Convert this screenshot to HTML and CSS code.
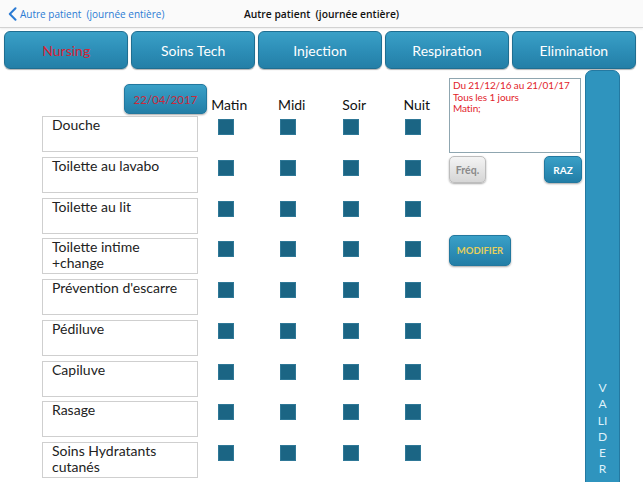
FILE: index.html
```html
<!DOCTYPE html>
<html lang="fr">
<head>
<meta charset="utf-8">
<title>Autre patient (journée entière)</title>
<link rel="stylesheet" href="styles.css">
</head>
<body>
<header class="topbar">
  <a class="back" href="#">
    <svg class="chev" width="9" height="14" viewBox="0 0 9 14"><path d="M7.5 1.2 L1.8 7 L7.5 12.8" fill="none" stroke="#2b7bd4" stroke-width="2" stroke-linecap="round" stroke-linejoin="round"/></svg>
    <span>Autre patient&nbsp; (journée entière)</span>
  </a>
  <h1 class="title">Autre patient&nbsp; (journée entière)</h1>
  <span></span>
</header>

<nav class="tabs">
  <button class="tab tab-active">Nursing</button>
  <button class="tab">Soins Tech</button>
  <button class="tab">Injection</button>
  <button class="tab">Respiration</button>
  <button class="tab">Elimination</button>
</nav>

<main class="main">
  <section class="planner">
    <div class="grid header-row">
      <button class="btn btn-blue date">22/04/2017</button>
      <span class="col-h">Matin</span>
      <span class="col-h">Midi</span>
      <span class="col-h">Soir</span>
      <span class="col-h">Nuit</span>
    </div>
    <div class="rows">
      <div class="grid row"><div class="label">Douche</div><span class="sq"></span><span class="sq"></span><span class="sq"></span><span class="sq"></span></div>
      <div class="grid row"><div class="label">Toilette au lavabo</div><span class="sq"></span><span class="sq"></span><span class="sq"></span><span class="sq"></span></div>
      <div class="grid row"><div class="label">Toilette au lit</div><span class="sq"></span><span class="sq"></span><span class="sq"></span><span class="sq"></span></div>
      <div class="grid row"><div class="label">Toilette intime<br>+change</div><span class="sq"></span><span class="sq"></span><span class="sq"></span><span class="sq"></span></div>
      <div class="grid row"><div class="label">Prévention d'escarre</div><span class="sq"></span><span class="sq"></span><span class="sq"></span><span class="sq"></span></div>
      <div class="grid row"><div class="label">Pédiluve</div><span class="sq"></span><span class="sq"></span><span class="sq"></span><span class="sq"></span></div>
      <div class="grid row"><div class="label">Capiluve</div><span class="sq"></span><span class="sq"></span><span class="sq"></span><span class="sq"></span></div>
      <div class="grid row"><div class="label">Rasage</div><span class="sq"></span><span class="sq"></span><span class="sq"></span><span class="sq"></span></div>
      <div class="grid row"><div class="label">Soins Hydratants<br>cutanés</div><span class="sq"></span><span class="sq"></span><span class="sq"></span><span class="sq"></span></div>
    </div>
  </section>

  <aside class="side">
    <div class="note">Du 21/12/16 au 21/01/17<br>Tous les 1 jours<br>Matin;</div>
    <div class="btn-row">
      <button class="btn btn-grey freq">Fréq.</button>
      <button class="btn btn-blue raz">RAZ</button>
    </div>
    <button class="btn btn-blue modify">MODIFIER</button>
  </aside>

  <button class="validate"><span class="validate-label">VALIDER</span></button>
</main>
</body>
</html>
```

FILE: styles.css
```css
html, body {
  margin: 0;
  padding: 0;
}
body {
  height: 482px;
  overflow: hidden;
  background: #ffffff;
  font-family: Lato, "Open Sans", sans-serif;
  color: #222;
}
button {
  font-family: Lato, "Open Sans", sans-serif;
  cursor: pointer;
  padding: 0;
}

/* Top navigation bar */
.topbar {
  display: grid;
  grid-template-columns: 1fr auto 1fr;
  align-items: center;
  height: 27px;
  background: #fafafa;
  border-bottom: 1px solid #d2d2d2;
  box-shadow: 0 1px 2px rgba(0, 0, 0, 0.08);
}
.back {
  display: flex;
  align-items: center;
  gap: 3px;
  padding-left: 8px;
  color: #2b7bd4;
  text-decoration: none;
  font-family: "Open Sans", "Liberation Sans", sans-serif;
  font-size: 10px;
}
.chev {
  display: block;
}
.title {
  margin: 0;
  font-family: "Open Sans", "Liberation Sans", sans-serif;
  font-weight: 600;
  font-size: 10.3px;
  color: #111;
}

/* Tabs */
.tabs {
  display: flex;
  gap: 2.5px;
  padding: 3px 7px 0 4px;
}
.tab {
  flex: 1;
  height: 38px;
  border-radius: 6px;
  border: 1px solid #1f6e91;
  background: linear-gradient(#3aa0c7, #2c8db6 55%, #247fa7);
  box-shadow: 0 1px 1px rgba(0, 0, 0, 0.3);
  color: #ffffff;
  font-size: 14px;
}
.tab-active {
  color: #d42436;
}

/* Main area */
.main {
  display: flex;
  margin-top: 1px;
}
.planner {
  width: 449px;
  flex: none;
  box-sizing: border-box;
  padding: 14px 0 0 42px;
}
.grid {
  display: grid;
  grid-template-columns: 156px repeat(4, 62.5px);
}
.header-row {
  height: 30px;
  margin-bottom: 2px;
}
.col-h {
  align-self: end;
  text-align: center;
  font-size: 14px;
  line-height: 16px;
  margin-bottom: 1px;
  color: #111;
}
.rows {
  display: flex;
  flex-direction: column;
  gap: 4.75px;
}
.row {
  height: 36px;
}
.label {
  box-sizing: border-box;
  height: 36px;
  border: 1px solid #cfcfcf;
  padding: 0 9px;
  font-size: 14px;
  line-height: 16px;
  color: #222;
}
.sq {
  align-self: start;
  justify-self: center;
  width: 16px;
  height: 16px;
  margin-top: 3px;
  margin-right: 7px;
  box-sizing: border-box;
  background: #1b6584;
  border: 1px solid #2f7897;
}

/* Buttons */
.btn {
  border-radius: 5px;
  box-shadow: 0 1px 2px rgba(0, 0, 0, 0.35);
}
.btn-blue {
  border: 1px solid #22789f;
  background: linear-gradient(#3aa0c7, #2c8db6 55%, #237ea6);
  color: #ffffff;
}
.btn-grey {
  border: 1px solid #bdbdbd;
  background: linear-gradient(#f4f4f4, #d6d6d6);
  color: #8a8a8a;
}
.date {
  justify-self: end;
  margin-right: -9px;
  width: 83px;
  height: 30px;
  color: #c92a3c;
  font-size: 11.5px;
}

/* Side panel */
.side {
  width: 133px;
  flex: none;
  display: flex;
  flex-direction: column;
  padding-top: 8px;
}
.note {
  box-sizing: border-box;
  width: 132px;
  height: 75px;
  border: 1px solid #8fa6b0;
  padding: 1px 3px;
  color: #e2232b;
  font-size: 10px;
  line-height: 11.7px;
  letter-spacing: -0.1px;
  white-space: nowrap;
  overflow: hidden;
}
.btn-row {
  display: flex;
  justify-content: space-between;
  margin-top: 3px;
}
.freq {
  width: 37px;
  height: 27px;
  font-size: 10.5px;
  font-weight: 700;
}
.raz {
  width: 38px;
  height: 27px;
  font-size: 10px;
  font-weight: 700;
}
.modify {
  margin-top: 52px;
  width: 62px;
  height: 31px;
  color: #e6cf5c;
  font-size: 9.5px;
  font-weight: 700;
}

/* Validate bar */
.validate {
  flex: none;
  margin-left: 3px;
  width: 35px;
  height: 480px;
  box-sizing: border-box;
  border-radius: 7px 7px 0 0;
  border: 1px solid #2479a1;
  background: #2f94be;
  display: flex;
  justify-content: center;
  align-items: flex-start;
  padding-top: 309px;
}
.validate-label {
  width: 1em;
  word-break: break-all;
  text-align: center;
  color: #dff1fa;
  font-size: 12px;
  line-height: 16.3px;
}
```
